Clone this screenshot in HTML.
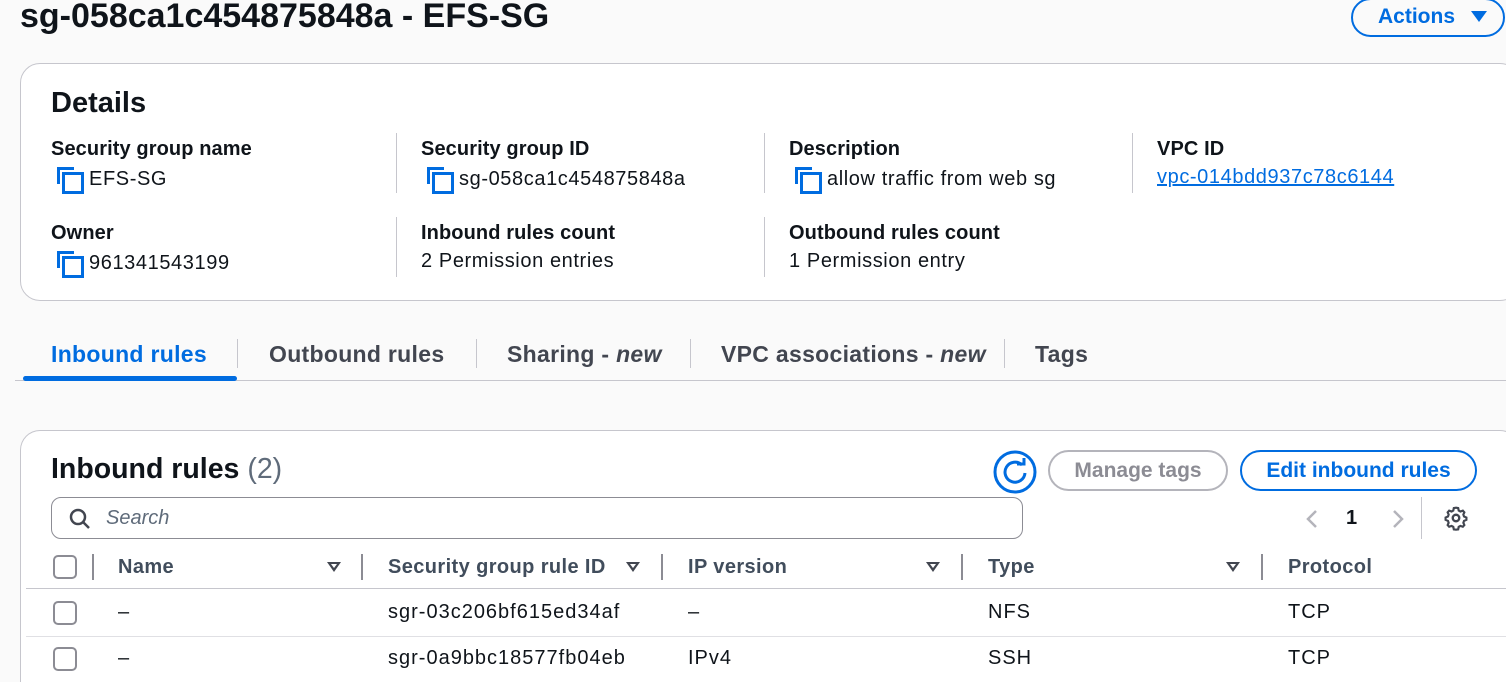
<!DOCTYPE html>
<html><head><meta charset="utf-8"><style>
*{box-sizing:border-box;margin:0;padding:0}
html,body{width:1506px;height:682px;overflow:hidden}
body{background:#fafafa;font-family:"Liberation Sans",sans-serif;color:#0f141a;position:relative}
#w{position:absolute;left:0;top:0;width:1506px;height:682px;overflow:hidden}
.a{position:absolute;white-space:nowrap}
.card{position:absolute;background:#fff;border:1px solid #c6c6cd;border-radius:20px}
.lbl{font-size:20px;font-weight:bold;letter-spacing:0.1px}
.val{font-size:20px;letter-spacing:0.6px}
.cp{display:inline-block;width:24px;height:24px;position:relative;vertical-align:-5px;margin-right:10px}
.cp:before{content:"";position:absolute;left:2px;top:1px;width:14px;height:14px;border-left:3px solid #006ce0;border-top:3px solid #006ce0}
.cp:after{content:"";position:absolute;left:7px;top:6px;width:16px;height:16px;border:3px solid #006ce0}
.vsep{position:absolute;width:1px;background:#c6c6cd}
.tab{font-size:23px;font-weight:bold;color:#424650;letter-spacing:0.3px}
.cb{position:absolute;width:24px;height:24px;border:2px solid #8c8c94;border-radius:5px;background:#fff}
.th{font-size:20px;font-weight:bold;color:#414d5c;letter-spacing:0.4px}
.tri{position:absolute;width:0;height:0;border-left:7px solid transparent;border-right:7px solid transparent;border-top:10px solid #424650}
.tri:after{content:"";position:absolute;left:-3px;top:-8px;border-left:3px solid transparent;border-right:3px solid transparent;border-top:4px solid #fff}
.hs{position:absolute;width:2px;height:26px;background:#8c8c94;top:554px}
.td{font-size:20px;letter-spacing:1px}
</style></head><body><div id="w">
<div class="a" style="left:20px;top:-3px;font-size:34px;font-weight:bold">sg-058ca1c454875848a - EFS-SG</div>
<div class="a" style="left:1351px;top:-2px;width:154px;height:39px;border:2px solid #006ce0;border-radius:20px;color:#006ce0;font-size:21px;font-weight:bold;padding:5px 0 0 25px">Actions <svg width="16" height="12" viewBox="0 0 16 12" style="margin-left:10px;vertical-align:0"><path d="M0 0 H16 L8 11 Z" fill="#006ce0"/></svg></div>

<div class="card" style="left:20px;top:63px;width:1500px;height:238px"></div>
<div class="a" style="left:51px;top:87px;font-size:29px;font-weight:bold">Details</div>
<div class="a lbl" style="left:51px;top:138px">Security group name</div>
<div class="a val" style="left:55px;top:166px"><span class="cp"></span>EFS-SG</div>
<div class="a lbl" style="left:51px;top:222px">Owner</div>
<div class="a val" style="left:55px;top:250px"><span class="cp"></span>961341543199</div>
<div class="vsep" style="left:396px;top:133px;height:60px"></div>
<div class="vsep" style="left:396px;top:217px;height:60px"></div>
<div class="a lbl" style="left:421px;top:138px">Security group ID</div>
<div class="a val" style="left:425px;top:166px"><span class="cp"></span>sg-058ca1c454875848a</div>
<div class="a lbl" style="left:421px;top:222px">Inbound rules count</div>
<div class="a val" style="left:421px;top:250px">2 Permission entries</div>
<div class="vsep" style="left:764px;top:133px;height:60px"></div>
<div class="vsep" style="left:764px;top:217px;height:60px"></div>
<div class="a lbl" style="left:789px;top:138px">Description</div>
<div class="a val" style="left:793px;top:166px"><span class="cp"></span>allow traffic from web sg</div>
<div class="a lbl" style="left:789px;top:222px">Outbound rules count</div>
<div class="a val" style="left:789px;top:250px">1 Permission entry</div>
<div class="vsep" style="left:1132px;top:133px;height:60px"></div>
<div class="a lbl" style="left:1157px;top:138px">VPC ID</div>
<div class="a val" style="left:1157px;top:166px;color:#006ce0;text-decoration:underline">vpc-014bdd937c78c6144</div>

<div class="a tab" style="left:51px;top:341px;color:#006ce0">Inbound rules</div>
<div class="a tab" style="left:269px;top:341px">Outbound rules</div>
<div class="a tab" style="left:507px;top:341px">Sharing - <i>new</i></div>
<div class="a tab" style="left:721px;top:341px">VPC associations - <i>new</i></div>
<div class="a tab" style="left:1035px;top:341px">Tags</div>
<div class="vsep" style="left:237px;top:339px;height:29px"></div>
<div class="vsep" style="left:476px;top:339px;height:29px"></div>
<div class="vsep" style="left:690px;top:339px;height:29px"></div>
<div class="vsep" style="left:1004px;top:339px;height:29px"></div>
<div class="a" style="left:15px;top:380px;width:1491px;height:1px;background:#c6c6cd"></div>
<div class="a" style="left:23px;top:376px;width:214px;height:5px;background:#006ce0;border-radius:3px"></div>

<div class="card" style="left:20px;top:430px;width:1500px;height:252px;border-bottom:none;border-bottom-left-radius:0;border-bottom-right-radius:0"></div>
<div class="a" style="left:51px;top:453px;font-size:28.5px;font-weight:bold">Inbound rules <span style="font-weight:normal;color:#5f6b7a">(2)</span></div>
<svg class="a" style="left:993px;top:450px" width="44" height="44" viewBox="0 0 44 44"><circle cx="22" cy="22" r="20" fill="none" stroke="#006ce0" stroke-width="3"/><path d="M29 15 A10 10 0 1 0 32 23" fill="none" stroke="#006ce0" stroke-width="3"/><path d="M24 14 L31 14 L31 8" fill="none" stroke="#006ce0" stroke-width="3"/></svg>
<div class="a" style="left:1048px;top:450px;width:180px;height:41px;border:2px solid #b4b4bb;border-radius:21px;color:#8c8c94;font-size:21px;font-weight:bold;text-align:center;padding-top:7px">Manage tags</div>
<div class="a" style="left:1240px;top:450px;width:237px;height:41px;border:2px solid #006ce0;border-radius:21px;color:#006ce0;font-size:21px;font-weight:bold;text-align:center;padding-top:7px">Edit inbound rules</div>
<div class="a" style="left:51px;top:497px;width:972px;height:42px;border:1px solid #8c8c94;border-radius:10px;background:#fff"></div>
<svg class="a" style="left:68px;top:507px" width="24" height="24" viewBox="0 0 24 24"><circle cx="10" cy="10" r="7" fill="none" stroke="#424650" stroke-width="2.5"/><path d="M15 15 L21 21" stroke="#424650" stroke-width="2.5"/></svg>
<div class="a" style="left:106px;top:507px;font-size:20px;font-style:italic;color:#5f6b7a">Search</div>
<svg class="a" style="left:1302px;top:507px" width="110" height="24" viewBox="0 0 110 24"><path d="M14 4 L6 12 L14 20" fill="none" stroke="#b4b4bb" stroke-width="2.5"/><path d="M92 4 L100 12 L92 20" fill="none" stroke="#b4b4bb" stroke-width="2.5"/></svg>
<div class="a" style="left:1346px;top:507px;font-size:20px;font-weight:bold">1</div>
<div class="vsep" style="left:1421px;top:497px;height:42px"></div>
<svg class="a" style="left:1443px;top:505px" width="26" height="26" viewBox="0 0 24 24"><path d="M12 2.5l2 .3.5 2.3 1.6.9 2.2-.8 1.4 1.6-.9 2 .6 1.8 2.2 1v2.1l-2.2 1-.6 1.8.9 2-1.4 1.6-2.2-.8-1.6.9-.5 2.3-2 .3-2-.3-.5-2.3-1.6-.9-2.2.8-1.4-1.6.9-2-.6-1.8-2.2-1v-2.1l2.2-1 .6-1.8-.9-2 1.4-1.6 2.2.8 1.6-.9.5-2.3z" fill="none" stroke="#424650" stroke-width="2"/><circle cx="12" cy="12" r="3" fill="none" stroke="#424650" stroke-width="2.2"/></svg>

<div class="cb" style="left:53px;top:555px"></div>
<div class="hs" style="left:92px"></div>
<div class="a th" style="left:118px;top:556px">Name</div>
<div class="tri" style="left:327px;top:562px"></div>
<div class="hs" style="left:361px"></div>
<div class="a th" style="left:388px;top:556px">Security group rule ID</div>
<div class="tri" style="left:626px;top:562px"></div>
<div class="hs" style="left:661px"></div>
<div class="a th" style="left:688px;top:556px">IP version</div>
<div class="tri" style="left:926px;top:562px"></div>
<div class="hs" style="left:961px"></div>
<div class="a th" style="left:988px;top:556px">Type</div>
<div class="tri" style="left:1226px;top:562px"></div>
<div class="hs" style="left:1261px"></div>
<div class="a th" style="left:1288px;top:556px">Protocol</div>
<div class="a" style="left:26px;top:588px;width:1480px;height:1px;background:#c6c6cd"></div>
<div class="cb" style="left:53px;top:601px"></div>
<div class="a td" style="left:118px;top:601px">–</div>
<div class="a td" style="left:388px;top:601px">sgr-03c206bf615ed34af</div>
<div class="a td" style="left:688px;top:601px">–</div>
<div class="a td" style="left:988px;top:601px">NFS</div>
<div class="a td" style="left:1288px;top:601px">TCP</div>
<div class="a" style="left:26px;top:636px;width:1480px;height:1px;background:#e0e0e4"></div>
<div class="cb" style="left:53px;top:647px"></div>
<div class="a td" style="left:118px;top:647px">–</div>
<div class="a td" style="left:388px;top:647px">sgr-0a9bbc18577fb04eb</div>
<div class="a td" style="left:688px;top:647px">IPv4</div>
<div class="a td" style="left:988px;top:647px">SSH</div>
<div class="a td" style="left:1288px;top:647px">TCP</div>
</div></body></html>
